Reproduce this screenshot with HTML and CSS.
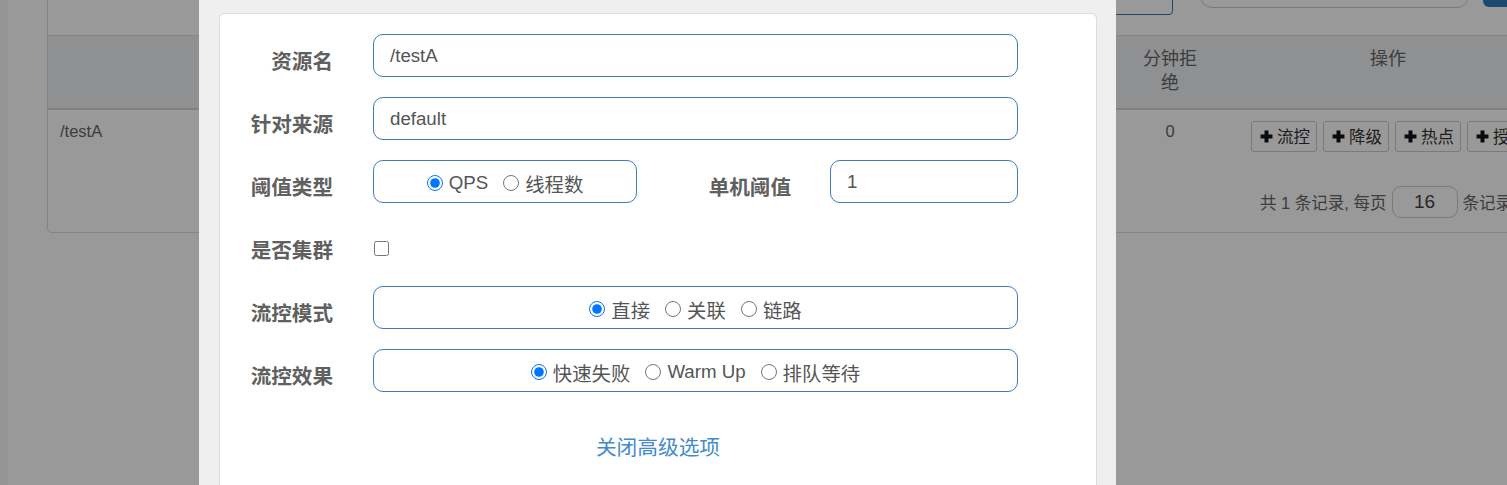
FILE: index.html
```html
<!DOCTYPE html>
<html lang="zh">
<head>
<meta charset="utf-8">
<title>流控规则</title>
<link rel="stylesheet" href="styles.css">
</head>
<body>
<div class="page">
  <div class="strip"></div>
  <div class="main">
    <div class="panel">
      <div class="toolbar">
        <div class="tb-box"></div>
        <div class="tb-search"></div>
        <div class="tb-btn"></div>
      </div>
      <div class="thead">
        <div class="c-name"></div>
        <div class="c-rej">分钟拒绝</div>
        <div class="c-ops">操作</div>
      </div>
      <div class="trow">
        <div class="c-name">/testA</div>
        <div class="c-rej">0</div>
        <div class="c-ops ops">
          <span class="btn"><svg class="plus" viewBox="0 0 12 12"><path d="M6 0.5V11.5M0.5 6H11.5"/></svg>流控</span>
          <span class="btn"><svg class="plus" viewBox="0 0 12 12"><path d="M6 0.5V11.5M0.5 6H11.5"/></svg>降级</span>
          <span class="btn"><svg class="plus" viewBox="0 0 12 12"><path d="M6 0.5V11.5M0.5 6H11.5"/></svg>热点</span>
          <span class="btn"><svg class="plus" viewBox="0 0 12 12"><path d="M6 0.5V11.5M0.5 6H11.5"/></svg>授权</span>
        </div>
      </div>
      <div class="pager">共 1 条记录, 每页<span class="pg-input">16</span>条记录</div>
    </div>
  </div>
</div>
<div class="backdrop"></div>
<div class="modal">
  <div class="card">
    <div class="frow">
      <div class="flabel">资源名</div>
      <div class="fctl">/testA</div>
    </div>
    <div class="frow">
      <div class="flabel">针对来源</div>
      <div class="fctl">default</div>
    </div>
    <div class="frow">
      <div class="flabel">阈值类型</div>
      <div class="fctl radios narrow">
        <label class="opt"><input type="radio" name="grade" checked>QPS</label>
        <label class="opt"><input type="radio" name="grade"><span class="cj">线程数</span></label>
      </div>
      <div class="flabel wide">单机阈值</div>
      <div class="fctl small">1</div>
    </div>
    <div class="frow">
      <div class="flabel">是否集群</div>
      <input class="chk" type="checkbox">
    </div>
    <div class="frow">
      <div class="flabel">流控模式</div>
      <div class="fctl radios">
        <label class="opt"><input type="radio" name="mode" checked><span class="cj">直接</span></label>
        <label class="opt"><input type="radio" name="mode"><span class="cj">关联</span></label>
        <label class="opt"><input type="radio" name="mode"><span class="cj">链路</span></label>
      </div>
    </div>
    <div class="frow">
      <div class="flabel">流控效果</div>
      <div class="fctl radios">
        <label class="opt"><input type="radio" name="eff" checked><span class="cj">快速失败</span></label>
        <label class="opt"><input type="radio" name="eff">Warm Up</label>
        <label class="opt"><input type="radio" name="eff"><span class="cj">排队等待</span></label>
      </div>
    </div>
    <div class="more">关闭高级选项</div>
  </div>
</div>
</body>
</html>
```

FILE: styles.css
```css
html, body {
  margin: 0;
  padding: 0;
  width: 1507px;
  height: 485px;
  overflow: hidden;
  background: #fff;
  font-family: "Liberation Sans", "Noto Sans CJK SC", sans-serif;
}

.page {
  display: flex;
  height: 485px;
}

.strip {
  width: 8px;
  flex: none;
  background: #f8f8f8;
}

.main {
  flex: 1;
  padding-left: 39px;
}

.panel {
  width: 1520px;
  margin-top: -40px;
  border: 1px solid #ddd;
  border-radius: 5px;
  background: #fff;
  box-sizing: border-box;
}

.toolbar {
  height: 74px;
  display: flex;
  align-items: flex-end;
  padding-left: 952px;
}

.tb-box {
  width: 173px;
  height: 34px;
  border: 1px solid #337ab7;
  border-radius: 4px;
  box-sizing: border-box;
  margin-bottom: 20px;
}

.tb-search {
  width: 269px;
  height: 34px;
  margin-left: 27px;
  border: 1px solid #ccc;
  border-radius: 12px;
  box-sizing: border-box;
  margin-bottom: 27px;
}

.tb-btn {
  width: 80px;
  height: 34px;
  margin-left: 14px;
  background: #337ab7;
  border-radius: 6px;
  margin-bottom: 28px;
}

.thead {
  display: flex;
  border-top: 1px solid #ddd;
  border-bottom: 2px solid #d6d6d6;
  background: #eef0f3;
  font-size: 18px;
  line-height: 24px;
  color: #666;
}

.thead > div {
  padding: 11px 8px 13px;
  box-sizing: border-box;
}

.c-name {
  flex: 1;
}

.c-rej {
  width: 80px;
  flex: none;
  text-align: center;
}

.c-ops {
  width: 356px;
  flex: none;
  text-align: center;
}

.trow {
  display: flex;
  height: 66px;
  font-size: 16.5px;
  line-height: 24px;
  color: #666;
}

.trow .c-name {
  padding: 9px 12px;
}

.trow .c-rej {
  padding-top: 9px;
}

.ops {
  display: flex;
  gap: 6px;
  padding: 11px 0 0 41px;
  box-sizing: border-box;
}

.btn {
  display: flex;
  align-items: center;
  gap: 4px;
  height: 31px;
  padding: 0 6px 0 8px;
  border: 1px solid #ccc;
  border-radius: 3px;
  box-sizing: border-box;
  font-size: 16.5px;
  color: #333;
  flex: none;
}

.plus {
  width: 13px;
  height: 13px;
}

.plus path {
  stroke: #111;
  stroke-width: 3.6;
  fill: none;
}

.pager {
  display: flex;
  align-items: center;
  padding: 10px 0 14px 1212px;
  font-size: 16.5px;
  color: #666;
  white-space: nowrap;
}

.pg-input {
  width: 66px;
  height: 32px;
  margin: 0 5px;
  border: 1px solid #ccc;
  border-radius: 9px;
  box-sizing: border-box;
  display: flex;
  align-items: center;
  justify-content: center;
  font-size: 19px;
  color: #444;
}

.backdrop {
  position: fixed;
  inset: 0;
  background: rgba(0, 0, 0, 0.4);
}

.modal {
  position: fixed;
  left: 199px;
  top: 0;
  width: 917px;
  height: 485px;
  background: #efefef;
  overflow: hidden;
}

.card {
  margin: 13px 19px 0 20px;
  min-height: 600px;
  background: #fff;
  border: 1px solid #dcdcdc;
  border-radius: 6px;
  padding-top: 20px;
  box-sizing: border-box;
}

.frow {
  display: flex;
  align-items: flex-start;
  height: 43px;
  margin-bottom: 20px;
}

.flabel {
  width: 113px;
  flex: none;
  text-align: right;
  font-family: "Noto Sans CJK SC", sans-serif;
  font-weight: bold;
  font-size: 20.6px;
  line-height: 28px;
  padding-top: 12px;
  color: #606060;
}

.flabel.wide {
  width: 154px;
}

.fctl {
  margin-left: 40px;
  width: 645px;
  height: 43px;
  flex: none;
  border: 1px solid #3d7cc0;
  border-radius: 10px;
  box-sizing: border-box;
  padding: 0 16px;
  display: flex;
  align-items: center;
  font-size: 18.7px;
  color: #555;
}

.fctl.narrow {
  width: 264px;
}

.fctl.small {
  margin-left: 39px;
  width: 188px;
}

.radios {
  justify-content: center;
  gap: 15px;
  padding-top: 3px;
}

.opt {
  display: flex;
  align-items: center;
  gap: 6px;
  white-space: nowrap;
}

.cj {
  font-size: 19.4px;
}

.opt input {
  width: 16px;
  height: 16px;
  margin: 0;
}

.chk {
  width: 15px;
  height: 15px;
  margin: 18px 0 0 41px;
}

.more {
  margin-top: 42px;
  text-align: center;
  font-size: 20.7px;
  line-height: 28px;
  color: #428bca;
}
```
